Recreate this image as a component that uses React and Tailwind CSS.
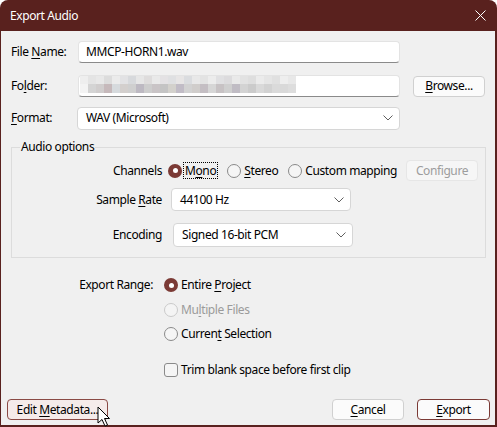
import React from "react";

const U = ({ children }) => (
  <span className="underline decoration-[1px] underline-offset-[2px]">{children}</span>
);

function Radio({ checked, disabled }) {
  if (checked)
    return (
      <span className="w-[14px] h-[14px] rounded-full bg-[#7b3a35] flex items-center justify-center shrink-0">
        <span className="w-[5px] h-[5px] rounded-full bg-white" />
      </span>
    );
  return (
    <span
      className={
        disabled
          ? "block w-[14px] h-[14px] rounded-full border border-[#cacaca] bg-[#f4f4f4] shrink-0"
          : "block w-[14px] h-[14px] rounded-full border border-[#8a8a8a] bg-[#f5f5f5] shrink-0"
      }
    />
  );
}

function Chevron() {
  return (
    <svg width="10" height="6" viewBox="0 0 10 6" className="shrink-0">
      <path d="M0.5 0.5 L5 5 L9.5 0.5" fill="none" stroke="#5f5f5f" strokeWidth="1" />
    </svg>
  );
}

function Select({ w, h, text }) {
  return (
    <div
      className={`${w} ${h} bg-white border border-[#d6d6d6] rounded-[4px] flex items-center pl-[8px] pr-[6px] justify-between`}
    >
      <span>{text}</span>
      <Chevron />
    </div>
  );
}

function Button({ className, children }) {
  return (
    <div
      className={`h-[21px] rounded-[4px] border flex items-center justify-center ${className}`}
    >
      {children}
    </div>
  );
}

const row1 = [
  "#eeeeee", "#e4e4e4", "#e8e8e8", "#dcdcdc", "#ebebeb", "#e2e2e4", "#d7d9dc", "#e6e6e6",
  "#dedcdc", "#e9e9e9", "#e4e2e4", "#dfe0e2", "#e7e5e5", "#dadcdf", "#e8e8e8", "#e3e3e3",
  "#ececec", "#e0e0e2", "#dcdbdd", "#e9e9e9", "#e2e2e2", "#dedede", "#ebebeb", "#e5e5e5",
  "#e0e0e0", "#eeeeee", "#e8e8e8",
];
const row2 = [
  "#e6e6e6", "#d4d4d4", "#d0cdcd", "#c6b9bb", "#d6dadd", "#d3cfcd", "#cfcfcf", "#bdb9c2",
  "#cdcdcd", "#c9c4c6", "#c4c4c4", "#d3d1cc", "#c1bcc6", "#d2d2d2", "#d0cdcb", "#c4bec3",
  "#d6d6d6", "#c7c2c4", "#cfcfcf", "#c0bcc4", "#d3d3d3", "#cbcbcb", "#d9d9d9", "#d2d2d2",
  "#dadada", "#d9d9d9", "#dddddd",
];

function Mosaic() {
  return (
    <svg width="218" height="18" viewBox="0 0 218 18" className="block">
      {row1.map((c, i) => (
        <rect key={"a" + i} x={i * 8} y={0} width={8} height={8} fill={c} />
      ))}
      {row2.map((c, i) => (
        <rect key={"b" + i} x={i * 8} y={8} width={8} height={9} fill={i === 0 ? "#f3f3f3" : c} />
      ))}
    </svg>
  );
}

export default function App() {
  return (
    <div className="w-[497px] h-[427px] relative bg-white font-['Segoe_UI','Noto_Sans',sans-serif] text-[12px] leading-[16px] tracking-[-0.4px] text-[#000]">
      <div className="w-[497px] h-[427px] bg-[#59211e] rounded-t-[8px] flex flex-col overflow-hidden">
        {/* Title bar */}
        <div className="h-[31px] flex items-center justify-between pl-[10px] pr-[10px] text-white shrink-0">
          <span className="text-[12px]">Export Audio</span>
          <svg width="11" height="11" viewBox="0 0 11 11" className="mr-[1px]">
            <path d="M0.5 0.5 L10.5 10.5 M10.5 0.5 L0.5 10.5" stroke="#ffffff" strokeWidth="1" />
          </svg>
        </div>

        {/* Body */}
        <div className="flex-1 ml-[1px] mr-[2px] mb-[2px] bg-[#f0f0f0] flex flex-col">
          <div className="pl-[10px] pt-[10px] flex flex-col">
            {/* File name */}
            <div className="flex items-center h-[22px]">
              <span className="w-[67px]">
                File <U>N</U>ame:
              </span>
              <div className="w-[322px] h-[22px] bg-white border border-[#e3e3e3] border-b-[#8a8a8a] rounded-[4px] flex items-center pl-[7px]">
                MMCP-HORN1.wav
              </div>
            </div>
            {/* Folder */}
            <div className="flex items-center h-[22px] mt-[12px]">
              <span className="w-[67px]">
                Fo<U>l</U>der:
              </span>
              <div className="w-[322px] h-[22px] bg-white border border-[#e3e3e3] border-b-[#8a8a8a] rounded-[4px] flex items-start pl-[1px]">
                <Mosaic />
              </div>
              <Button className="ml-[13px] w-[72px] bg-[#fbfbfb] border-[#d0d0d0]">
                <span>
                  <U>B</U>rowse...
                </span>
              </Button>
            </div>
            {/* Format */}
            <div className="flex items-center h-[22px] mt-[10px]">
              <span className="w-[66px]">
                <U>F</U>ormat:
              </span>
              <Select w="w-[323px]" h="h-[23px]" text="WAV (Microsoft)" />
            </div>

            {/* Audio options group */}
            <div className="mt-[18px] w-[475px] h-[111px] border border-[#dcdcdc] relative flex flex-col">
              <span className="absolute left-[8px] top-[-9px] px-[1px] bg-[#f0f0f0] leading-[16px]">
                Audio options
              </span>
              {/* Channels */}
              <div className="mt-[13px] h-[19px] flex items-center">
                <span className="w-[150px] text-right">Channels</span>
                <span className="ml-[6px] flex">
                  <Radio checked />
                </span>
                <span className="ml-[1px] px-[1px] border border-dotted border-[#000] leading-[15px] h-[17px]">
                  M<U>o</U>no
                </span>
                <span className="ml-[9px] flex">
                  <Radio />
                </span>
                <span className="ml-[3px]">
                  <U>S</U>tereo
                </span>
                <span className="ml-[10px] flex">
                  <Radio />
                </span>
                <span className="ml-[3px]">
                  Custom mappin<U>g</U>
                </span>
                <Button className="ml-auto mr-[7px] w-[72px] h-[20px] bg-[#f6f6f6] border-[#e6e6e6] text-[#9d9d9d]">
                  Configure
                </Button>
              </div>
              {/* Sample rate */}
              <div className="mt-[8px] h-[23px] flex items-center">
                <span className="w-[150px] text-right">
                  Sample <U>R</U>ate
                </span>
                <div className="ml-[9px]">
                  <Select w="w-[180px]" h="h-[23px]" text="44100 Hz" />
                </div>
              </div>
              {/* Encoding */}
              <div className="mt-[12px] h-[24px] flex items-center">
                <span className="w-[150px] text-right">Encoding</span>
                <div className="ml-[11px]">
                  <Select w="w-[180px]" h="h-[24px]" text="Signed 16-bit PCM" />
                </div>
              </div>
            </div>

            {/* Export range */}
            <div className="mt-[19px] h-[16px] flex items-center">
              <span className="w-[142px] text-right">Export Range:</span>
              <span className="ml-[11px] flex">
                <Radio checked />
              </span>
              <span className="ml-[3px]">
                Entire <U>P</U>roject
              </span>
            </div>
            <div className="mt-[9px] h-[16px] flex items-center pl-[153px] text-[#9b9b9b]">
              <Radio disabled />
              <span className="ml-[3px]">
                Mu<U>l</U>tiple Files
              </span>
            </div>
            <div className="mt-[8px] h-[16px] flex items-center pl-[153px]">
              <Radio />
              <span className="ml-[3px]">
                Curren<U>t</U> Selection
              </span>
            </div>
            <div className="mt-[20px] h-[16px] flex items-center pl-[153px]">
              <span className="block w-[14px] h-[14px] rounded-[3px] border border-[#8a8a8a] bg-[#f5f5f5] shrink-0" />
              <span className="ml-[3px]">Trim blank space before first clip</span>
            </div>
          </div>

          {/* Bottom buttons */}
          <div className="mt-auto mb-[5px] flex items-center pl-[6px] pr-[5px]">
            <Button className="w-[101px] bg-[#f5ebea] border-[#8a4a45]">
              <span>
                Edit <U>M</U>etadata...
              </span>
            </Button>
            <Button className="ml-auto w-[72px] bg-[#fbfbfb] border-[#d0d0d0]">
              <span>
                <U>C</U>ancel
              </span>
            </Button>
            <Button className="ml-[13px] w-[73px] bg-[#fbfbfb] border-[#7b3a35]">
              <span>
                <U>E</U>xport
              </span>
            </Button>
          </div>
        </div>
      </div>

      {/* Mouse cursor */}
      <svg
        width="14"
        height="22"
        viewBox="0 0 14 22"
        className="absolute left-[97px] top-[406px]"
      >
        <path
          d="M1 1 L1 17 L5 13.5 L8 20 L10.5 19 L7.5 12.5 L12.5 12.5 Z"
          fill="#ffffff"
          stroke="#000000"
          strokeWidth="1"
          strokeLinejoin="round"
        />
      </svg>
    </div>
  );
}
